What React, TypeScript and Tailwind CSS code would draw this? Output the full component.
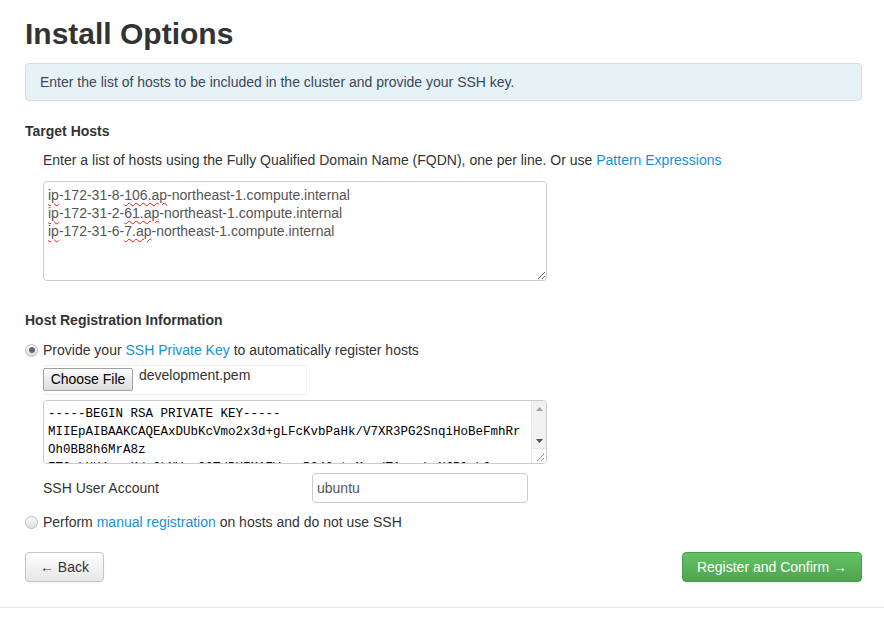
import React from 'react';

const hostLines = [
  ['ip', '-172-31-8-', '106.ap', '-northeast-1.compute.internal'],
  ['ip', '-172-31-2-', '61.ap', '-northeast-1.compute.internal'],
  ['ip', '-172-31-6-', '7.ap', '-northeast-1.compute.internal'],
];

const keyText = [
  '-----BEGIN RSA PRIVATE KEY-----',
  'MIIEpAIBAAKCAQEAxDUbKcVmo2x3d+gLFcKvbPaHk/V7XR3PG2SnqiHoBeFmhRr',
  'Oh0BB8h6MrA8z',
  'FT0qLHU4eo+Kd+9bNVexQ0TdPUFMAEVnuqP94OatoMpzdTAvpvkwNJPlcb2',
  'q7Hn3K2xLw9pVbR0s8mF1dQeT6yZcN4jG5hA2uW7iO3kP8lE9fX0vB1nM6',
].join('\n');

function Radio({ checked }: { checked?: boolean }) {
  return (
    <span className="relative inline-flex w-[13px] h-[13px] rounded-full border border-[#b9b9b9] bg-gradient-to-b from-[#fbfbfb] to-[#dedede] items-center justify-center shrink-0">
      {checked && <span className="w-[6px] h-[6px] rounded-full bg-[#666]" />}
    </span>
  );
}

function Squiggle({ children }: { children: React.ReactNode }) {
  return (
    <span className="underline decoration-wavy decoration-[#e02020] decoration-[1px] underline-offset-[2px]">
      {children}
    </span>
  );
}

// classic scrollbar column drawn beside the key textarea
function FakeScrollbar() {
  return (
    <div className="w-[15px] flex flex-col bg-[#f1f1f1] border-l border-[#e8e8e8]">
      <div className="h-[15px] flex items-center justify-center">
        <svg width="7" height="4" viewBox="0 0 7 4">
          <path d="M0 4 L3.5 0 L7 4 Z" fill="#a3a3a3" />
        </svg>
      </div>
      <div className="flex-1" />
      <div className="h-[15px] flex items-center justify-center">
        <svg width="7" height="4" viewBox="0 0 7 4">
          <path d="M0 0 L3.5 4 L7 0 Z" fill="#505050" />
        </svg>
      </div>
      <div className="h-[15px] bg-white border-t border-[#e8e8e8] flex items-end justify-end p-[2px]">
        <svg width="8" height="8" viewBox="0 0 8 8">
          <path d="M8 1 L1 8 M8 5 L5 8" stroke="#888" strokeWidth="1" />
        </svg>
      </div>
    </div>
  );
}

export default function App() {
  const link = 'text-[#1a8fd6]';
  return (
    <div className="w-[884px] min-h-[627px] bg-white text-[#333] text-[14px] leading-[20px] font-['Liberation_Sans',Arial,sans-serif]">
      <div className="ml-[25px] w-[837px] pt-[16px]">
        <h1 className="text-[30px] leading-[36px] font-bold">Install Options</h1>

        <div className="mt-[11px] rounded-[4px] border border-[#cfe1e8] bg-[#e6f2f6] px-[14px] py-[8px] text-[#3b4856]">
          Enter the list of hosts to be included in the cluster and provide your SSH key.
        </div>

        {/* Target hosts */}
        <h4 className="mt-[20px] font-bold">Target Hosts</h4>
        <div className="ml-[18px]">
          <p className="mt-[9px]">
            Enter a list of hosts using the Fully Qualified Domain Name (FQDN), one per line. Or use{' '}
            <a className={link}>Pattern Expressions</a>
          </p>
          <div className="mt-[11px] w-[504px] h-[100px] resize overflow-auto rounded-[4px] border border-[#ccc] px-[4px] py-[4px] text-[#555] leading-[18px]">
            {hostLines.map((l, i) => (
              <div key={i}>
                <Squiggle>{l[0]}</Squiggle>
                {l[1]}
                <Squiggle>{l[2]}</Squiggle>
                {l[3]}
              </div>
            ))}
          </div>
        </div>

        {/* Host registration */}
        <h4 className="mt-[29px] font-bold">Host Registration Information</h4>
        <label className="mt-[10px] flex items-center gap-[5px]">
          <Radio checked />
          <span>
            Provide your <a className={link}>SSH Private Key</a> to automatically register hosts
          </span>
        </label>

        <div className="ml-[18px]">
          <div className="mt-[5px] flex items-start w-[264px] h-[30px] border border-[#f0f0f0] border-l-0">
            <button className="mt-[2px] h-[23px] w-[90px] rounded-[2px] border border-[#a0a0a0] bg-gradient-to-b from-[#fbfbfb] to-[#dcdcdc] text-[14px] leading-[19px] text-black font-['Liberation_Sans',Arial,sans-serif]">
              Choose File
            </button>
            <span className="ml-[6px] mt-[-1px] leading-[20px]">development.pem</span>
          </div>

          <div className="mt-[5px] w-[504px] h-[64px] flex rounded-[4px] border border-[#ccc] overflow-hidden">
            <textarea
              readOnly
              value={keyText}
              spellCheck={false}
              className="flex-1 resize-none overflow-hidden whitespace-pre px-[4px] pt-[4px] pb-0 text-[12.5px] leading-[18px] text-black font-['Liberation_Mono','Courier_New',monospace] outline-none"
            />
            <FakeScrollbar />
          </div>

          <div className="mt-[9px] grid grid-cols-[269px_216px] items-center">
            <span>SSH User Account</span>
            <input
              readOnly
              value="ubuntu"
              className="h-[30px] rounded-[4px] border border-[#ccc] px-[4px] text-[14px] text-[#555] outline-none"
            />
          </div>
        </div>

        <label className="mt-[9px] flex items-center gap-[5px]">
          <Radio />
          <span>
            Perform <a className={link}>manual registration</a> on hosts and do not use SSH
          </span>
        </label>

        <div className="mt-[20px] flex justify-between">
          <button className="h-[30px] w-[79px] rounded-[4px] border border-[#c5c5c5] bg-gradient-to-b from-white to-[#e6e6e6] text-[#333] shadow-[0_1px_2px_rgba(0,0,0,0.05)]">
            ← Back
          </button>
          <button className="h-[30px] w-[180px] rounded-[4px] border border-[#4a9a4a] bg-gradient-to-b from-[#62c462] to-[#51a351] text-white shadow-[0_1px_2px_rgba(0,0,0,0.05)]">
            Register and Confirm →
          </button>
        </div>
      </div>
      <hr className="mt-[25px] border-0 border-t border-[#e5e5e5]" />
    </div>
  );
}
